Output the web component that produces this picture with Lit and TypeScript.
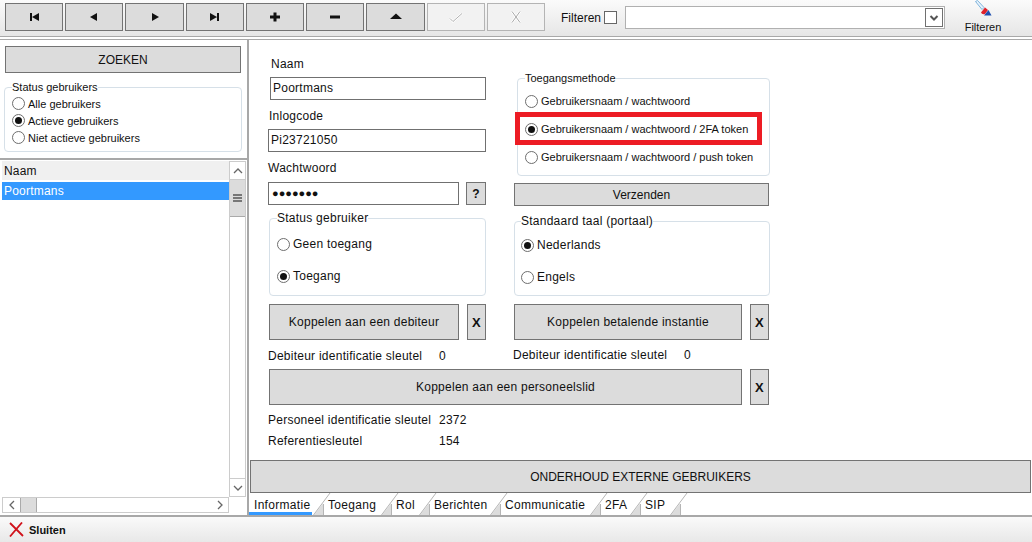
import { LitElement, html, css, svg } from "lit";
import { customElement } from "lit/decorators.js";

const ic = (p: unknown, w = 16, h = 12) => html`<svg width=${w} height=${h} viewBox="0 0 16 12">${p}</svg>`;
const radio = (label: string, on = false) =>
  html`<label class="radio"><span class="dot ${on ? "on" : ""}"></span><span>${label}</span></label>`;

const TABS: [string, number][] = [
  ["Informatie", 74], ["Toegang", 68], ["Rol", 38], ["Berichten", 71], ["Communicatie", 100], ["2FA", 40], ["SIP", 40],
];

@customElement("app-root")
export class AppRoot extends LitElement {
  static styles = css`
    :host { display: block; width: 1032px; height: 542px; overflow: hidden; background: #fff;
      font-family: "Liberation Sans", Arial, sans-serif; font-size: 12px; color: #111; }
    * { box-sizing: border-box; }
    .app { display: flex; flex-direction: column; height: 542px; }
    .btn { display: flex; align-items: center; justify-content: center; background: #dcdcdc;
      border: 1px solid #737373; color: #111; }
    .toolbar { height: 40px; flex: none; display: flex; background: linear-gradient(#fbfbfb, #e4e4e4);
      border-bottom: 1px solid #a8a8a8; box-shadow: inset 0 -2px 0 #fff, inset 0 -3px 0 #a8a8a8; padding: 3px 0 0 5px; }
    .tools { display: flex; gap: 2px; height: 28px; }
    .tool { width: 58px; }
    .tool.w59 { width: 59px; }
    .tool.off { background: #f2f2f2; border-color: #b4b4b4; }
    .filter { display: flex; align-items: center; height: 23px; margin: 3px 0 0 16px; font-size: 12px; }
    .check { width: 13px; height: 13px; border: 1px solid #666; background: #fff; margin-left: 3px; }
    .combo { width: 320px; height: 23px; margin-left: 8px; background: #fff; border: 1px solid #b0b0b0;
      display: flex; justify-content: flex-end; align-items: center; padding-right: 1px; }
    .combo-btn { width: 18px; height: 19px; border: 1px solid #707070; display: flex; align-items: center; justify-content: center; }
    .fbtn { margin: -3px 0 0 19px; width: 38px; display: flex; flex-direction: column; align-items: center; font-size: 11px; }
    .fbtn span { margin-top: 5px; white-space: nowrap; }

    .main { flex: 1; display: flex; min-height: 0; border-bottom: 2px solid #a8a8a8; }
    .side { width: 249px; flex: none; display: flex; flex-direction: column; border-right: 2px solid #a8a8a8; }
    .zoeken { height: 27px; margin: 6px 6px 0 5px; font-size: 12px; flex: none; }
    fieldset { margin: 0; padding: 0; border: 1px solid #d6e0e8; border-radius: 4px; min-width: 0; }
    legend { padding: 0; margin: 0; line-height: 14px; font-size: 11px; }
    .status { margin: 7px 5px 0 4px; height: 72px; padding: 1px 0 0 7px; flex: none; }
    .status .radio { height: 17px; font-size: 11px; }
    .radio { display: flex; align-items: center; white-space: nowrap; }
    .dot { width: 13px; height: 13px; flex: none; border: 1px solid #6e6e6e; border-radius: 50%; background: #fff;
      display: flex; align-items: center; justify-content: center; margin-right: 3px; }
    .dot.on::after { content: ""; width: 7px; height: 7px; border-radius: 50%; background: #111; }
    .list { margin-top: 6px; flex: 1; border-top: 2px solid #a8a8a8; padding: 1px 1px 2px 2px; display: grid;
      grid-template-columns: 227px 17px; grid-template-rows: 1fr 16px; min-height: 0; letter-spacing: .2px; }
    .rows { min-width: 0; }
    .head { height: 19px; background: #f0f0f0; line-height: 20px; padding-left: 2px; font-size: 12px; margin-bottom: 2px; }
    .row { height: 18px; background: #3399ff; color: #fff; line-height: 19px; padding-left: 2px; font-size: 12px; }
    .vbar, .hbar { background: #fff; border: 1px solid #ccc; display: flex; }
    .vbar { flex-direction: column; justify-content: space-between; grid-row: 1; grid-column: 2; }
    .hbar { justify-content: space-between; align-items: stretch; grid-column: 1; grid-row: 2; }
    .arrow { display: flex; align-items: center; justify-content: center; flex: none; }
    .vbar .arrow { height: 18px; border-bottom: 1px solid #ccc; }
    .vbar .arrow.bot { border-bottom: 0; border-top: 1px solid #ccc; }
    .hbar .arrow { width: 17px; }
    .vtrack { flex: 1; }
    .vthumb { height: 37px; background: #dcdcdc; border-bottom: 1px solid #aaa; display: flex; align-items: center; justify-content: center; }
    .hleft { display: flex; flex: 1; }
    .hthumb { width: 17px; background: #dcdcdc; border: 1px solid #aaa; border-width: 0 1px; margin-right: auto; }

    .pane { flex: 1; display: flex; flex-direction: column; min-width: 0; }
    .form { flex: 1; padding: 0 0 0 19px; font-size: 12px; letter-spacing: .25px; min-height: 0; }
    .cols { display: flex; gap: 28px; }
    .col { width: 218px; display: flex; flex-direction: column; }
    .col.r { width: 255px; }
    .lbl { line-height: 16px; height: 16px; flex: none; }
    .input { height: 23px; flex: none; background: #fff; border: 1px solid #707070; line-height: 20px; padding-left: 2px; font-size: 12px; }
    .nm-lbl { margin: 16px 0 5px 3px; }
    .nm-input { margin-left: 2px; }
    .ic-lbl { margin: 8px 0 5px 1px; }
    .pw-lbl { margin-top: 8px; }
    .pw { display: flex; justify-content: space-between; align-items: flex-start; margin-top: 6px; flex: none; }
    .pw .input { width: 191px; height: 23px; font-size: 11px; letter-spacing: 0; line-height: 20px; padding-left: 3px; }
    .q { width: 20px; height: 23px; font-weight: 700; }
    .group { position: relative; flex: none; }
    .g-status { margin: 6px 0 0 1px; height: 85px; padding: 0 0 0 7px; }
    .g-status legend, .g-lang legend { font-size: 12px; }
    .g-status .radio, .g-lang .radio { height: 32px; }
    .g-status legend + .radio { margin-top: 3px; }
    .g-lang legend + .radio { margin-top: 1px; }
    .g-method { margin: 31px 0 0 3px; width: 253px; height: 105px; padding: 2px 0 0 7px; }
    .g-method legend { font-size: 11px; letter-spacing: 0; }
    .g-method .radio { height: 28px; font-size: 11px; letter-spacing: 0; }
    .mark { position: absolute; left: -3px; top: 27px; width: 247px; height: 33px; border: 5px solid #ed1c24; pointer-events: none; }
    .verzenden { height: 23px; margin-top: 7px; width: 255px; font-size: 12px; letter-spacing: 0; flex: none; }
    .g-lang { margin-top: 8px; width: 256px; height: 82px; padding: 0 0 0 6px; }
    .link { display: flex; justify-content: space-between; height: 36px; margin-top: 8px; flex: none; }
    .link .btn:first-child { flex: 1; margin-right: 8px; }
    .x { width: 19px; font-weight: 700; font-size: 13px; flex: none; }
    .col.l .link { margin-left: 1px; }
    .kv { display: flex; line-height: 16px; height: 16px; margin-top: 7px; white-space: nowrap; flex: none; }
    .kv b { font-weight: 400; width: 171px; flex: none; }
    .col.l .kv { margin-top: 8px; }
    .col.r .kv { margin-left: -1px; }
    .wide { margin: 5px 0 0 1px; width: 500px; height: 36px; display: flex; }
    .wide .btn:first-child { width: 473px; margin-right: 8px; }
    .kvs { margin-top: 7px; display: flex; flex-direction: column; gap: 5px; }
    .kvs .kv { margin: 0; }
    .big { height: 33px; margin: 0 1px; flex: none; }
    .tabs { height: 22px; flex: none; display: flex; align-items: stretch; letter-spacing: .3px; }
    .tab { position: relative; padding: 5px 0 0 5px; white-space: nowrap; font-size: 12px; flex: none; }
    .tab.active::after { content: ""; position: absolute; left: 0; right: 11px; bottom: 0; height: 3px; background: #3399ff; }
    .slant { position: absolute; left: calc(100% - 10px); top: 0; }

    .foot { height: 25px; flex: none; display: flex; align-items: center; padding: 0 0 0 9px;
      background: linear-gradient(#fafafa, #e8e8e8); font-weight: 700; font-size: 11px; gap: 5px; }
  `;

  render() {
    const dark = "#111";
    return html`<div class="app">
      <div class="toolbar">
        <div class="tools">
          <div class="btn tool">${ic(svg`<path d="M4 2h2v8H4zM13 2v8L6 6z" fill=${dark}/>`)}</div>
          <div class="btn tool">${ic(svg`<path d="M11 2v8L4 6z" fill=${dark}/>`)}</div>
          <div class="btn tool w59">${ic(svg`<path d="M5 2v8l7-4z" fill=${dark}/>`)}</div>
          <div class="btn tool">${ic(svg`<path d="M3 2v8l7-4zM10 2h2v8h-2z" fill=${dark}/>`)}</div>
          <div class="btn tool">${ic(svg`<path d="M6.5 1.500h3v3H13v3H9.500v3h-3v-3H3v-3h3.500z" fill=${dark}/>`)}</div>
          <div class="btn tool">${ic(svg`<path d="M3 4.500h10v3H3z" fill=${dark}/>`)}</div>
          <div class="btn tool w59">${ic(svg`<path d="M8 2.500l6 5.500H2z" fill=${dark}/>`)}</div>
          <div class="btn tool off">${ic(svg`<path d="M2 7.500l3 3 9-8" fill="none" stroke="#fff" stroke-width="2.200"/><path d="M2 7.500l3 3 9-8" fill="none" stroke="#b0b0b0"/>`)}</div>
          <div class="btn tool off">${ic(svg`<path d="M4 .5l8 11M12 .5l-8 11" fill="none" stroke="#fff" stroke-width="2.400"/><path d="M4 .5l8 11M12 .5l-8 11" fill="none" stroke="#a8a8a8"/>`)}</div>
        </div>
        <div class="filter">
          <span>Filteren</span><span class="check"></span>
          <div class="combo"><div class="combo-btn">
            <svg width="10" height="6" viewBox="0 0 10 6"><path d="M1.500 1L5 4.500 8.500 1" fill="none" stroke="#555" stroke-width="2"/></svg>
          </div></div>
        </div>
        <div class="fbtn">
          <svg width="18" height="16" viewBox="0 0 18 16">
            <path d="M1.500 1.500l2-1 6.500 7-2 2z" fill="#e8f3fc" stroke="#7fb4dc"/>
            <path d="M7 12.500l4-5 3 2.500-3 4q-3 1-4-1.500z" fill="#e0202a"/>
            <path d="M10 15.500l4.500-5.500 3 5.500z" fill="#1f4fb0"/>
          </svg>
          <span>Filteren</span>
        </div>
      </div>
      <div class="main">
        <div class="side">
          <div class="btn zoeken">ZOEKEN</div>
          <fieldset class="status">
            <legend>Status gebruikers</legend>
            ${radio("Alle gebruikers")}
            ${radio("Actieve gebruikers", true)}
            ${radio("Niet actieve gebruikers")}
          </fieldset>
          <div class="list">
            <div class="rows">
              <div class="head">Naam</div>
              <div class="row">Poortmans</div>
            </div>
            <div class="vbar">
              <div class="arrow"><svg width="10" height="6" viewBox="0 0 10 6"><path d="M1 5l4-4 4 4" fill="none" stroke="#666" stroke-width="1.300"/></svg></div>
              <div class="vtrack"><div class="vthumb"><svg width="9" height="8" viewBox="0 0 9 8"><path d="M0 0h9v2H0zM0 3h9v2H0zM0 6h9v2H0z" fill="#777"/></svg></div></div>
              <div class="arrow bot"><svg width="10" height="6" viewBox="0 0 10 6"><path d="M1 1l4 4 4-4" fill="none" stroke="#666" stroke-width="1.300"/></svg></div>
            </div>
            <div class="hbar">
              <div class="hleft">
                <div class="arrow"><svg width="6" height="10" viewBox="0 0 6 10"><path d="M5 1L1 5l4 4" fill="none" stroke="#666" stroke-width="1.300"/></svg></div>
                <div class="hthumb"></div>
              </div>
              <div class="arrow"><svg width="6" height="10" viewBox="0 0 6 10"><path d="M1 1l4 4-4 4" fill="none" stroke="#666" stroke-width="1.300"/></svg></div>
            </div>
          </div>
        </div>
        <div class="pane">
          <div class="form">
            <div class="cols">
              <div class="col l">
                <div class="lbl nm-lbl">Naam</div>
                <div class="input nm-input">Poortmans</div>
                <div class="lbl ic-lbl">Inlogcode</div>
                <div class="input">Pi23721050</div>
                <div class="lbl pw-lbl">Wachtwoord</div>
                <div class="pw"><div class="input">●●●●●●●</div><div class="btn q">?</div></div>
                <fieldset class="group g-status">
                  <legend>Status gebruiker</legend>
                  ${radio("Geen toegang")}
                  ${radio("Toegang", true)}
                </fieldset>
                <div class="link"><div class="btn">Koppelen aan een debiteur</div><div class="btn x">X</div></div>
                <div class="kv"><b>Debiteur identificatie sleutel</b><span>0</span></div>
              </div>
              <div class="col r">
                <fieldset class="group g-method">
                  <legend>Toegangsmethode</legend>
                  ${radio("Gebruikersnaam / wachtwoord")}
                  ${radio("Gebruikersnaam / wachtwoord / 2FA token", true)}
                  ${radio("Gebruikersnaam / wachtwoord / push token")}
                  <div class="mark"></div>
                </fieldset>
                <div class="btn verzenden">Verzenden</div>
                <fieldset class="group g-lang">
                  <legend>Standaard taal (portaal)</legend>
                  ${radio("Nederlands", true)}
                  ${radio("Engels")}
                </fieldset>
                <div class="link"><div class="btn">Koppelen betalende instantie</div><div class="btn x">X</div></div>
                <div class="kv"><b>Debiteur identificatie sleutel</b><span>0</span></div>
              </div>
            </div>
            <div class="wide"><div class="btn">Koppelen aan een personeelslid</div><div class="btn x">X</div></div>
            <div class="kvs">
              <div class="kv"><b>Personeel identificatie sleutel</b><span>2372</span></div>
              <div class="kv"><b>Referentiesleutel</b><span>154</span></div>
            </div>
          </div>
          <div class="btn big">ONDERHOUD EXTERNE GEBRUIKERS</div>
          <div class="tabs">
            ${TABS.map(([t, w], i) => html`<div class="tab ${i === 0 ? "active" : ""}" style="width:${w}px">${t}
              <svg class="slant" width="18" height="22" viewBox="0 0 18 22"><path d="M1 22L10 10.500V22z" fill="#dcdcdc"/><path d="M.5 22L17 0M10.500 11V22" fill="none" stroke="#b5b5b5"/></svg>
            </div>`)}
          </div>
        </div>
      </div>
      <div class="foot">
        <svg width="15" height="15" viewBox="0 0 15 15"><path d="M1 1l13 13M13 .5L1 14.500" stroke="#d0121b" stroke-width="1.800" fill="none"/></svg>
        <span>Sluiten</span>
      </div>
    </div>`;
  }
}
